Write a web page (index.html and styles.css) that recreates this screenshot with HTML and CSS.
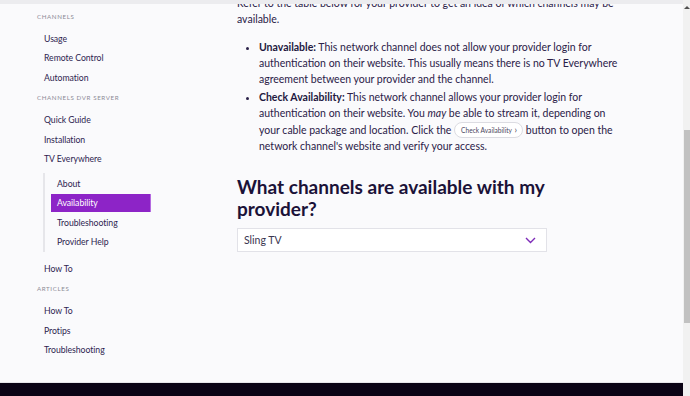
FILE: index.html
```html
<!DOCTYPE html>
<html lang="en">
<head>
<meta charset="utf-8">
<title>Availability - Channels DVR</title>
<link rel="stylesheet" href="styles.css">
</head>
<body>
<div class="window">
  <div class="page">
    <div class="topbar"></div>
    <div class="viewport">
      <div class="layout">
        <nav class="sidebar">
          <div class="nav-head">Channels</div>
          <a class="nav-item">Usage</a>
          <a class="nav-item">Remote Control</a>
          <a class="nav-item">Automation</a>
          <div class="nav-head">Channels DVR Server</div>
          <a class="nav-item">Quick Guide</a>
          <a class="nav-item">Installation</a>
          <a class="nav-item">TV Everywhere</a>
          <div class="sub-nav">
            <a class="sub-item">About</a>
            <a class="sub-item active">Availability</a>
            <a class="sub-item">Troubleshooting</a>
            <a class="sub-item">Provider Help</a>
          </div>
          <a class="nav-item">How To</a>
          <div class="nav-head">Articles</div>
          <a class="nav-item">How To</a>
          <a class="nav-item">Protips</a>
          <a class="nav-item">Troubleshooting</a>
        </nav>
        <main class="content">
          <p class="intro">Refer to the table below for your provider to get an idea of which channels may be available.</p>
          <ul class="legend">
            <li><strong>Unavailable:</strong> This network channel does not allow your provider login for authentication on their website. This usually means there is no TV Everywhere agreement between your provider and the channel.</li>
            <li><strong>Check Availability:</strong> This network channel allows your provider login for authentication on their website. You <em>may</em> be able to stream it, depending on your cable package and location. Click the <span class="chip">Check Availability <span class="chip-arrow">›</span></span> button to open the network channel's website and verify your access.</li>
          </ul>
          <h2 class="title">What channels are available with my provider?</h2>
          <div class="select">
            <span class="select-value">Sling TV</span>
            <svg class="chevron" width="11" height="7" viewBox="0 0 11 7"><path d="M1 1 L5.5 5.5 L10 1" fill="none" stroke="#7d2bb8" stroke-width="1.4"/></svg>
          </div>
        </main>
      </div>
    </div>
    <footer class="footer"></footer>
  </div>
  <div class="scrollbar">
    <div class="scroll-arrow"></div>
    <div class="scroll-thumb"></div>
  </div>
</div>
</body>
</html>
```

FILE: styles.css
```css
* { box-sizing: border-box; }
html, body { margin: 0; padding: 0; }
body {
  width: 690px;
  height: 396px;
  overflow: hidden;
  font-family: "Lato", "Liberation Sans", sans-serif;
  color: #2b2148;
  background: #fafafc;
}
.window {
  display: flex;
  width: 690px;
  height: 396px;
}
.page {
  width: 683px;
  display: flex;
  flex-direction: column;
  background: #fafafc;
}
.topbar {
  height: 4px;
  background: #ececef;
  flex: none;
}
.viewport {
  flex: 1;
  overflow: hidden;
}
.layout {
  display: flex;
}
.sidebar {
  width: 237px;
  flex: none;
  padding: 0.5px 0 0 37px;
  display: flex;
  flex-direction: column;
  align-items: flex-start;
}
.nav-head {
  font-size: 6.2px;
  letter-spacing: 0.6px;
  text-transform: uppercase;
  color: #8c8b96;
  padding-top: 1px;
  line-height: 22px;
  height: 23px;
}
.nav-item {
  display: block;
  font-size: 8.7px;
  letter-spacing: -0.05px;
  padding-top: 3px;
  line-height: 16.5px;
  padding-left: 7px;
  color: #2e2450;
}
.sub-nav {
  margin: 5.5px 0 5.5px 6px;
  border-left: 2px solid #e6e6ea;
  padding: 1px 0 0 6px;
  display: flex;
  flex-direction: column;
}
.sub-item {
  display: block;
  width: 100px;
  font-size: 8.7px;
  letter-spacing: -0.05px;
  padding-top: 1.5px;
  line-height: 16.5px;
  margin-bottom: 1.5px;
  padding-left: 6px;
  color: #2e2450;
}
.sub-item.active {
  background: #8d24c7;
  color: #ffffff;
  border-right: 1px solid #b46ae0;
}
.content {
  width: 383px;
  flex: none;
  font-size: 10.5px;
  line-height: 16.3px;
  color: #2b2148;
}
.intro {
  margin: -9px 0 11px 0;
}
.legend {
  margin: 0;
  padding-left: 22px;
}
.legend li {
  margin-bottom: 1.5px;
}
.legend strong {
  font-weight: 700;
  color: #221840;
}
.chip {
  display: inline-block;
  height: 16px;
  line-height: 14px;
  padding: 0 5px 0 6px;
  border: 1px solid #dcdce2;
  border-radius: 8px;
  background: #ffffff;
  font-size: 6.6px;
  color: #4a4660;
  vertical-align: 1px;
}
.chip-arrow {
  font-size: 9px;
  margin-left: 1px;
}
.title {
  margin: 22px 0 9px 0;
  font-size: 19px;
  line-height: 21.5px;
  font-weight: 700;
  color: #1b1238;
}
.select {
  width: 310px;
  height: 24px;
  background: #ffffff;
  border: 1px solid #e2e2e8;
  display: flex;
  align-items: center;
  justify-content: space-between;
  padding: 0 10px 0 6px;
  font-size: 10.5px;
  color: #3a3550;
}
.footer {
  height: 14px;
  flex: none;
  background: #0b0415;
  border-top: 1px solid #e6e6ea;
}
.scrollbar {
  width: 7px;
  flex: none;
  background: #f1f1f1;
  display: flex;
  flex-direction: column;
  align-items: center;
}
.scroll-arrow {
  margin-top: 6px;
  width: 0;
  height: 0;
  border-left: 3px solid transparent;
  border-right: 3px solid transparent;
  border-bottom: 3px solid #505050;
}
.scroll-thumb {
  margin-top: 121px;
  width: 6px;
  height: 193px;
  background: #c1c1c1;
}
```
